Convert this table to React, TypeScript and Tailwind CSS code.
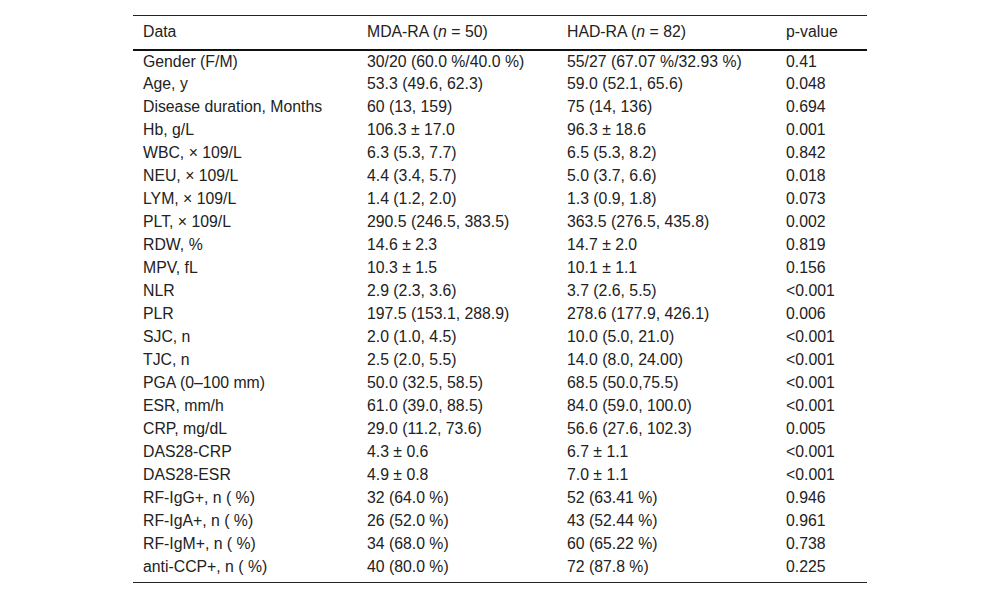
const rows: [string, string, string, string][] = [
  ["Gender (F/M)", "30/20 (60.0 %/40.0 %)", "55/27 (67.07 %/32.93 %)", "0.41"],
  ["Age, y", "53.3 (49.6, 62.3)", "59.0 (52.1, 65.6)", "0.048"],
  ["Disease duration, Months", "60 (13, 159)", "75 (14, 136)", "0.694"],
  ["Hb, g/L", "106.3 ± 17.0", "96.3 ± 18.6", "0.001"],
  ["WBC, × 109/L", "6.3 (5.3, 7.7)", "6.5 (5.3, 8.2)", "0.842"],
  ["NEU, × 109/L", "4.4 (3.4, 5.7)", "5.0 (3.7, 6.6)", "0.018"],
  ["LYM, × 109/L", "1.4 (1.2, 2.0)", "1.3 (0.9, 1.8)", "0.073"],
  ["PLT, × 109/L", "290.5 (246.5, 383.5)", "363.5 (276.5, 435.8)", "0.002"],
  ["RDW, %", "14.6 ± 2.3", "14.7 ± 2.0", "0.819"],
  ["MPV, fL", "10.3 ± 1.5", "10.1 ± 1.1", "0.156"],
  ["NLR", "2.9 (2.3, 3.6)", "3.7 (2.6, 5.5)", "<0.001"],
  ["PLR", "197.5 (153.1, 288.9)", "278.6 (177.9, 426.1)", "0.006"],
  ["SJC, n", "2.0 (1.0, 4.5)", "10.0 (5.0, 21.0)", "<0.001"],
  ["TJC, n", "2.5 (2.0, 5.5)", "14.0 (8.0, 24.00)", "<0.001"],
  ["PGA (0–100 mm)", "50.0 (32.5, 58.5)", "68.5 (50.0,75.5)", "<0.001"],
  ["ESR, mm/h", "61.0 (39.0, 88.5)", "84.0 (59.0, 100.0)", "<0.001"],
  ["CRP, mg/dL", "29.0 (11.2, 73.6)", "56.6 (27.6, 102.3)", "0.005"],
  ["DAS28-CRP", "4.3 ± 0.6", "6.7 ± 1.1", "<0.001"],
  ["DAS28-ESR", "4.9 ± 0.8", "7.0 ± 1.1", "<0.001"],
  ["RF-IgG+, n ( %)", "32 (64.0 %)", "52 (63.41 %)", "0.946"],
  ["RF-IgA+, n ( %)", "26 (52.0 %)", "43 (52.44 %)", "0.961"],
  ["RF-IgM+, n ( %)", "34 (68.0 %)", "60 (65.22 %)", "0.738"],
  ["anti-CCP+, n ( %)", "40 (80.0 %)", "72 (87.8 %)", "0.225"],
];

const cell = "h-[23px] p-0 pl-[10px] align-middle whitespace-nowrap";

export default function App() {
  return (
    <div className="w-[1000px] h-[599px] bg-white pt-[15px] text-[15.8px] leading-[18px] text-[#222] [font-family:'Liberation_Sans',Arial,sans-serif]">
      <table className="mx-auto w-[734px] table-fixed border-collapse">
        <colgroup>
          <col className="w-[224px]" />
          <col className="w-[200px]" />
          <col className="w-[219px]" />
          <col className="w-[91px]" />
        </colgroup>
        <thead>
          <tr className="border-t border-b-2 border-t-[#222] border-b-[#111]">
            <th className={`${cell} h-[34px] text-left font-normal`}>Data</th>
            <th className={`${cell} h-[34px] text-left font-normal`}>
              MDA-RA (<i>n</i> = 50)
            </th>
            <th className={`${cell} h-[34px] text-left font-normal`}>
              HAD-RA (<i>n</i> = 82)
            </th>
            <th className={`${cell} h-[34px] text-left font-normal`}>p-value</th>
          </tr>
        </thead>
        <tbody className="border-b border-b-[#222]">
          {rows.map((r, i) => (
            <tr key={i} className={i === rows.length - 1 ? "[&>td]:pb-[4px] [&>td]:h-[27px]" : ""}>
              {r.map((c, j) => (
                <td key={j} className={cell}>
                  {c}
                </td>
              ))}
            </tr>
          ))}
        </tbody>
      </table>
    </div>
  );
}
